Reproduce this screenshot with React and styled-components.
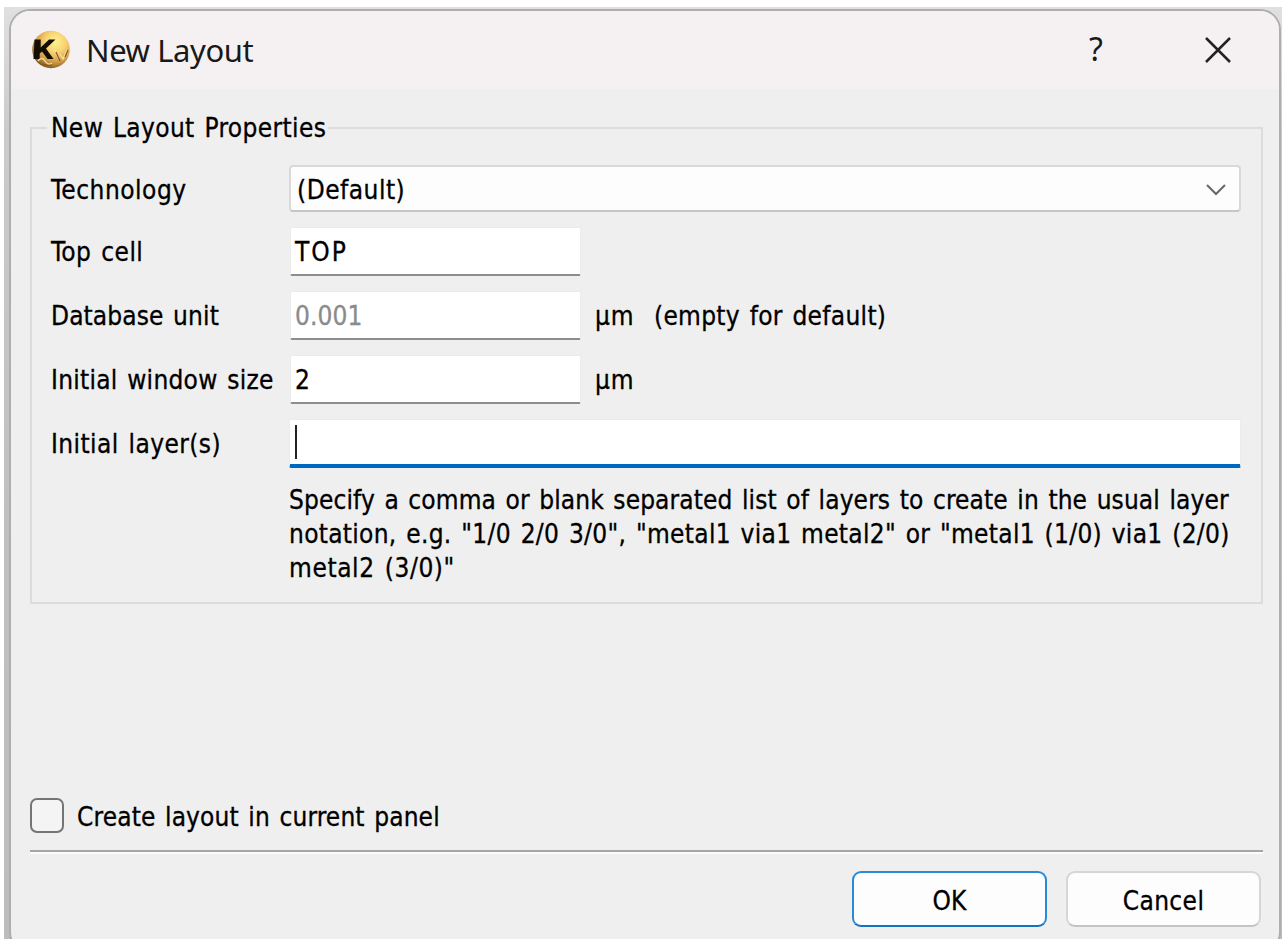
import React from "react";
import styled, { createGlobalStyle } from "styled-components";

const GlobalStyle = createGlobalStyle`
  * { box-sizing: border-box; }
  body { margin: 0; background: #fff; }
`;

const Screen = styled.main`
  width: 1288px;
  height: 948px;
  padding: 7px 6px 9px 4px;
  background: #fff;
  overflow: hidden;
`;

const Backdrop = styled.div`
  height: 932px;
  padding: 2px 1px 0 5px;
  overflow: hidden;
  background: linear-gradient(180deg, #e0e0e0 0, #cbcbcb 120px, #c0c0c0 500px, #bdbdbd 100%);
`;

const Dialog = styled.section`
  display: flex;
  flex-direction: column;
  height: 944px;
  border: 2px solid #aeaeae;
  border-radius: 21px;
  background: #efefef;
  overflow: hidden;
  color: #000;
  font: 26px/30px "DejaVu Sans Condensed", "DejaVu Sans", sans-serif;
  font-stretch: condensed;
  word-spacing: 2px;
  -webkit-text-stroke: 0.3px currentColor;
`;

const TitleBar = styled.header`
  display: flex;
  align-items: center;
  flex: none;
  height: 78px;
  padding: 0 47px 0 19px;
  background: #f5f1f3;
  -webkit-text-stroke: 0;
`;

const AppIcon = styled.svg`
  width: 42px;
  height: 40px;
  flex: none;
`;

const Title = styled.h1`
  flex: 1;
  margin: 0;
  padding: 0 0 0 14px;
  font: 400 31px/40px "Noto Sans", sans-serif;
  letter-spacing: -0.4px;
  word-spacing: 0;
  color: #191919;
`;

const HelpButton = styled.button`
  width: 20px;
  margin-right: 98px;
  padding: 0 0 3px;
  border: 0;
  background: none;
  font: 400 32px/40px "Noto Sans", sans-serif;
  color: #191919;
`;

const CloseButton = styled.button`
  display: flex;
  padding: 0;
  border: 0;
  background: none;
`;

const Body = styled.div`
  display: flex;
  flex-direction: column;
  padding: 23px 16px 0 19px;
`;

const Group = styled.fieldset`
  height: 492px;
  margin: 0;
  padding: 21px 20px 0 19px;
  border: 2px solid #dcdcdc;
`;

const Legend = styled.legend`
  margin-left: -4px;
  padding: 0 2px 0 4px;
  line-height: 32px;
  letter-spacing: 0.37px;
`;

const Form = styled.div`
  display: flex;
  flex-direction: column;
  gap: 15px;
`;

const Row = styled.div`
  display: grid;
  grid-template-columns: 238px 1fr;
  align-items: center;
  height: ${(p) => p.$height || 49}px;
`;

const Text = styled.span`
  white-space: pre;
  letter-spacing: ${(p) => p.$track || 0}px;
`;

const Label = styled(Text)`
  padding-top: ${(p) => p.$drop || 0}px;
`;

const Select = styled.div`
  display: flex;
  align-items: center;
  justify-content: space-between;
  height: 47px;
  padding: 2px 13px 0 6px;
  border: 2px solid #d9d9d9;
  border-bottom-color: #c6c6c6;
  border-radius: 4px;
  background: #fdfdfd;
`;

const Field = styled.div`
  display: flex;
  align-items: center;
`;

const Input = styled.div`
  display: flex;
  align-items: center;
  width: 291px;
  height: 49px;
  margin-left: 1px;
  padding: 2px 4px 0;
  border: 1px solid #ebebeb;
  border-bottom: 2px solid #8c8c8c;
  border-radius: 2px;
  background: #fff;
  color: ${(p) => (p.$placeholder ? "#8b8b8b" : "#000")};
`;

const FocusedInput = styled(Input)`
  width: 100%;
  margin-left: 0;
  padding: 0 5px;
  border-bottom: 4px solid #0067c0;
`;

const Caret = styled.i`
  width: 2px;
  height: 34px;
  background: #222;
`;

const Unit = styled(Text)`
  width: 59px;
  margin-left: 14px;
`;

const Hint = styled.p`
  margin: 0 0 0 238px;
  line-height: 34.2px;
`;

const HintLine = styled(Text)`
  display: block;
`;

const CheckRow = styled.label`
  display: flex;
  align-items: center;
  gap: 13px;
  margin-top: 194px;
  height: 35px;
`;

const CheckBox = styled.i`
  width: 34px;
  height: 35px;
  border: 2px solid #757575;
  border-radius: 7px;
  background: #f4f4f4;
`;

const Divider = styled.hr`
  width: 100%;
  height: 4px;
  margin: 17px 0 0;
  border: 0;
  border-top: 2px solid #a6a6a6;
  border-bottom: 2px solid #fbfbfb;
`;

const Buttons = styled.footer`
  display: flex;
  justify-content: flex-end;
  gap: 19px;
  margin-top: 17px;
  padding-right: 2px;
`;

const Button = styled.button`
  width: 195px;
  height: 56px;
  padding: 3px 0 0;
  border: 2px solid ${(p) => (p.$primary ? "#2a8ad8" : "#d6d6d6")};
  border-bottom-color: ${(p) => (p.$primary ? "#1272c4" : "#c4c4c4")};
  border-radius: 9px;
  background: #fdfdfd;
  color: #000;
  font: inherit;
`;

const Logo = () => (
  <AppIcon viewBox="0 0 42 40">
    <defs>
      <radialGradient id="gold" cx="0.62" cy="0.3" r="0.72">
        <stop offset="0" stopColor="#fff391" />
        <stop offset="0.4" stopColor="#f8d070" />
        <stop offset="0.75" stopColor="#cf9a45" />
        <stop offset="1" stopColor="#80581f" />
      </radialGradient>
    </defs>
    <circle cx="21" cy="19.5" r="18.8" fill="url(#gold)" />
    <path d="M4.500 9.500h6.200v8l8.300-8h6.500l-9.500 9 7.500 10.500h-6l-5.500-7.500-2.300 2v5.500H3.500z" fill="#120d05" />
    <path d="M8 31q4-5 7 0t7 2M25 20l4 8M30 24l3 5 4-9" fill="none" stroke="#fbe9b4" strokeWidth="1.4" opacity="0.85" />
    <path d="M26 22l4 9M13 34q4 2 9 1M35 27l3-7" fill="none" stroke="#845a1d" strokeWidth="1.2" />
  </AppIcon>
);

const UnitRow = ({ label, labelTrack, value, valueTrack, unit, note, placeholder }) => (
  <Row>
    <Label $track={labelTrack} $drop={1}>{label}</Label>
    <Field>
      <Input $placeholder={placeholder}><Text $track={valueTrack}>{value}</Text></Input>
      {unit && <Unit $track={0.8}>{unit}</Unit>}
      {note && <Text $track={0.3}>{note}</Text>}
    </Field>
  </Row>
);

const HINT = [
  ["Specify a comma or blank separated list of layers to create in the usual layer", 0.11],
  ['notation, e.g. "1/0 2/0 3/0", "metal1 via1 metal2" or "metal1 (1/0) via1 (2/0)', 0.3],
  ['metal2 (3/0)"', 0.6],
];

export default function App() {
  return (
    <Screen>
      <GlobalStyle />
      <Backdrop>
        <Dialog>
          <TitleBar>
            <Logo />
            <Title>New Layout</Title>
            <HelpButton>?</HelpButton>
            <CloseButton aria-label="Close">
              <svg width="28" height="28" viewBox="0 0 28 28">
                <path d="M2 2l24 24M26 2L2 26" fill="none" stroke="#222" strokeWidth="2.5" />
              </svg>
            </CloseButton>
          </TitleBar>
          <Body>
            <Group>
              <Legend>New Layout Properties</Legend>
              <Form>
                <Row $height={47}>
                  <Label $track={0.5} $drop={3}>Technology</Label>
                  <Select>
                    <Text $track={0.5}>(Default)</Text>
                    <svg width="20" height="12" viewBox="0 0 20 12">
                      <path d="M1 1l9 9 9-9" fill="none" stroke="#6a6a6a" strokeWidth="2.1" />
                    </svg>
                  </Select>
                </Row>
                <UnitRow label="Top cell" labelTrack={0.45} value="TOP" valueTrack={2} />
                <UnitRow
                  label="Database unit"
                  labelTrack={0.12}
                  value="0.001"
                  valueTrack={0.1}
                  placeholder
                  unit="µm"
                  note="(empty for default)"
                />
                <UnitRow label="Initial window size" labelTrack={0.26} value="2" unit="µm" />
                <Row>
                  <Label $track={0.42} $drop={1}>Initial layer(s)</Label>
                  <FocusedInput><Caret /></FocusedInput>
                </Row>
                <Hint>
                  {HINT.map(([line, track]) => (
                    <HintLine key={line} $track={track}>{line}</HintLine>
                  ))}
                </Hint>
              </Form>
            </Group>
            <CheckRow>
              <CheckBox />
              <Label $track={0.13} $drop={2}>Create layout in current panel</Label>
            </CheckRow>
            <Divider />
            <Buttons>
              <Button $primary><Text $track={0.2}>OK</Text></Button>
              <Button><Text $track={0.4}>Cancel</Text></Button>
            </Buttons>
          </Body>
        </Dialog>
      </Backdrop>
    </Screen>
  );
}
